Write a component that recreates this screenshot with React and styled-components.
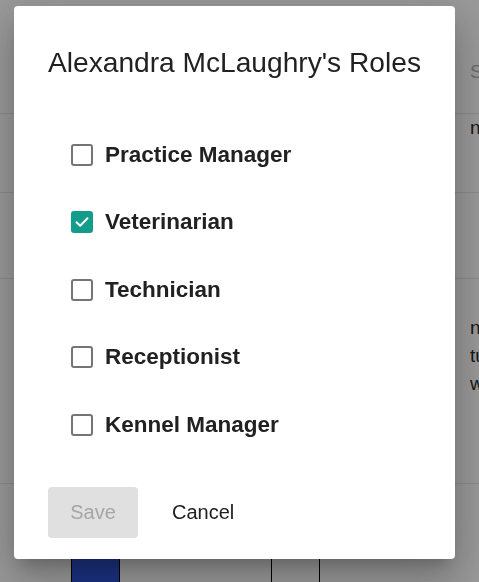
import React from 'react';
import styled, { createGlobalStyle } from 'styled-components';

const GlobalStyle = createGlobalStyle`
  html, body {
    margin: 0;
    padding: 0;
    background: #ffffff;
    font-family: 'Liberation Sans', Arial, sans-serif;
    overflow: hidden;
  }
`;

/* page behind the modal */
const Page = styled.div`
  width: 479px;
  height: 582px;
  display: flex;
  flex-direction: column;
`;

const Row = styled.div`
  height: ${(p) => p.h}px;
  flex-shrink: 0;
  border-bottom: 1px solid #e8e8e8;
  display: flex;
  box-sizing: border-box;
  padding-left: 470px;
  padding-top: ${(p) => p.pt || 0}px;
`;

const CellText = styled.div`
  font-size: 19px;
  line-height: 28px;
  color: ${(p) => (p.muted ? '#b4b4b4' : '#2a2a2a')};
  white-space: nowrap;
`;

const LastRow = styled.div`
  flex: 1;
  display: flex;
  align-items: flex-end;
`;

const Spacer = styled.div`
  width: ${(p) => p.w}px;
  flex-shrink: 0;
`;

const Block = styled.div`
  width: 49px;
  height: 60px;
  box-sizing: border-box;
  flex-shrink: 0;
  border-left: 1px solid #000;
  border-right: 1px solid #000;
  background: ${(p) => p.bg || 'transparent'};
`;

/* modal */
const Scrim = styled.div`
  position: fixed;
  inset: 0;
  background: rgba(0, 0, 0, 0.4);
  display: flex;
  align-items: flex-start;
  padding: 6px 0 0 14px;
`;

const Dialog = styled.div`
  width: 441px;
  height: 553px;
  box-sizing: border-box;
  background: #ffffff;
  border-radius: 4px;
  box-shadow: 0px 11px 15px -7px rgba(0, 0, 0, 0.2),
    0px 24px 38px 3px rgba(0, 0, 0, 0.14), 0px 9px 46px 8px rgba(0, 0, 0, 0.12);
  display: flex;
  flex-direction: column;
  padding: 40px 34px 21px;
`;

const Title = styled.h2`
  margin: 0;
  font-size: 28.15px;
  font-weight: 400;
  line-height: 34px;
  color: #212121;
  white-space: nowrap;
`;

const RoleList = styled.div`
  display: flex;
  flex-direction: column;
  padding: 41px 0 0 23px;
`;

const RoleRow = styled.label`
  height: 67.5px;
  display: flex;
  align-items: center;
  gap: 12px;
`;

const Box = styled.span`
  width: 22px;
  height: 22px;
  box-sizing: border-box;
  border-radius: 3px;
  border: ${(p) => (p.checked ? 'none' : '2px solid #757575')};
  background: ${(p) => (p.checked ? '#139b8c' : '#fff')};
  display: flex;
  align-items: center;
  justify-content: center;
`;

const RoleName = styled.span`
  font-size: 22.5px;
  font-weight: 700;
  color: #212121;
`;

const Actions = styled.div`
  margin-top: auto;
  display: flex;
  align-items: center;
  gap: 12px;
`;

const Button = styled.button`
  height: 51px;
  border: none;
  border-radius: 4px;
  font-family: 'Liberation Sans', Arial, sans-serif;
  font-size: 20px;
  padding: 0 22px;
  background: ${(p) => (p.disabled ? '#e0e0e0' : 'transparent')};
  color: ${(p) => (p.disabled ? '#a6a6a6' : '#212121')};
  min-width: 90px;
`;

const roles = [
  { name: 'Practice Manager', checked: false },
  { name: 'Veterinarian', checked: true },
  { name: 'Technician', checked: false },
  { name: 'Receptionist', checked: false },
  { name: 'Kennel Manager', checked: false },
];

const Check = () => (
  <svg width="16" height="16" viewBox="0 0 16 16" fill="none">
    <path d="M2.5 8.2 L6.2 11.8 L13.5 4.2" stroke="#fff" strokeWidth="2" strokeLinecap="round" strokeLinejoin="round" />
  </svg>
);

export default function App() {
  return (
    <>
      <GlobalStyle />
      <Page>
        <Row h={114} pt={58}>
          <CellText muted>S</CellText>
        </Row>
        <Row h={79} pt={0}>
          <CellText>n</CellText>
        </Row>
        <Row h={86} />
        <Row h={205} pt={35}>
          <div>
            <CellText>n</CellText>
            <CellText>tu</CellText>
            <CellText>w</CellText>
          </div>
        </Row>
        <LastRow>
          <Spacer w={71} />
          <Block bg="#2d53d9" />
          <Spacer w={151} />
          <Block />
        </LastRow>
      </Page>
      <Scrim>
        <Dialog>
          <Title>Alexandra McLaughry's Roles</Title>
          <RoleList>
            {roles.map((r) => (
              <RoleRow key={r.name}>
                <Box checked={r.checked}>{r.checked && <Check />}</Box>
                <RoleName>{r.name}</RoleName>
              </RoleRow>
            ))}
          </RoleList>
          <Actions>
            <Button disabled>Save</Button>
            <Button>Cancel</Button>
          </Actions>
        </Dialog>
      </Scrim>
    </>
  );
}
